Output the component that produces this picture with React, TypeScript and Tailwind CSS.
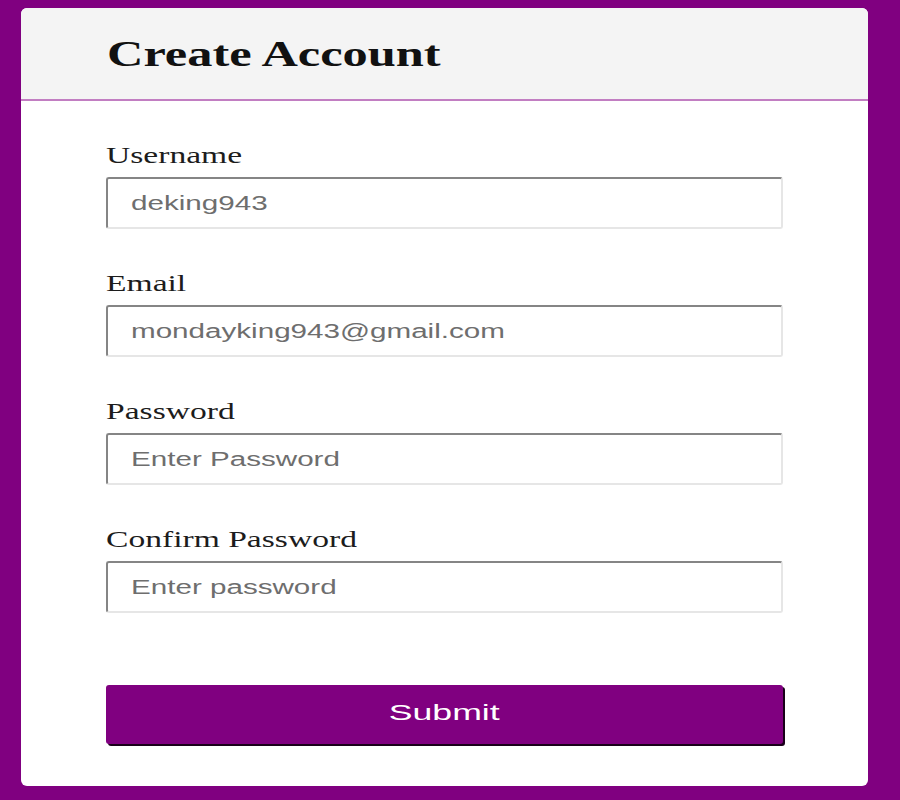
import React from 'react';

const fields = [
  { label: 'Username', value: 'deking943', placeholder: '' },
  { label: 'Email', value: 'mondayking943@gmail.com', placeholder: '' },
  { label: 'Password', value: '', placeholder: 'Enter Password' },
  { label: 'Confirm Password', value: '', placeholder: 'Enter password' },
];

export default function App() {
  return (
    <div className="min-h-[800px] bg-[#800080] pt-[8px] pb-[15px] pl-[21px] pr-[32px]">
      <div className="bg-white rounded-[6px] overflow-hidden">

        {/* Header */}
        <div className="h-[93px] bg-[#f4f4f4] border-b-2 border-[#c27ec2] flex items-center px-[86px]">
          <h1 className="text-[36px] leading-none font-bold text-[#111] font-['Liberation_Serif',serif]">
            <span className="inline-block origin-left scale-x-[1.4] whitespace-nowrap">Create Account</span>
          </h1>
        </div>

        {/* Form */}
        <form className="flex flex-col gap-[42px] px-[85px] pt-[42px] pb-[42px]" onSubmit={(e) => e.preventDefault()}>
          {fields.map((f) => (
            <div key={f.label} className="flex flex-col gap-[8px]">
              <label className="block h-[26px] text-[23px] leading-[26px] text-[#1c1c1c] font-['Liberation_Serif',serif]">
                <span className="inline-block origin-left scale-x-[1.46] whitespace-nowrap">{f.label}</span>
              </label>
              <div className="h-[52px] rounded-[3px] border-2 border-t-[#858585] border-l-[#858585] border-r-[#e6e6e6] border-b-[#e6e6e6] flex items-center pl-[23px] text-[20px] text-[#6e6e6e] font-['Liberation_Sans',sans-serif]">
                <span className="inline-block origin-left scale-x-[1.48] whitespace-nowrap">{f.value || f.placeholder}</span>
              </div>
            </div>
          ))}

          <button
            type="submit"
            className="mt-[30px] w-full h-[59px] rounded-[3px] bg-[#800080] shadow-[2px_2px_0_#1a001a] flex items-center justify-center pb-[4px] text-white text-[22px] font-['Liberation_Sans',sans-serif]"
          >
            <span className="inline-block scale-x-[1.62]">Submit</span>
          </button>
        </form>
      </div>
    </div>
  );
}
